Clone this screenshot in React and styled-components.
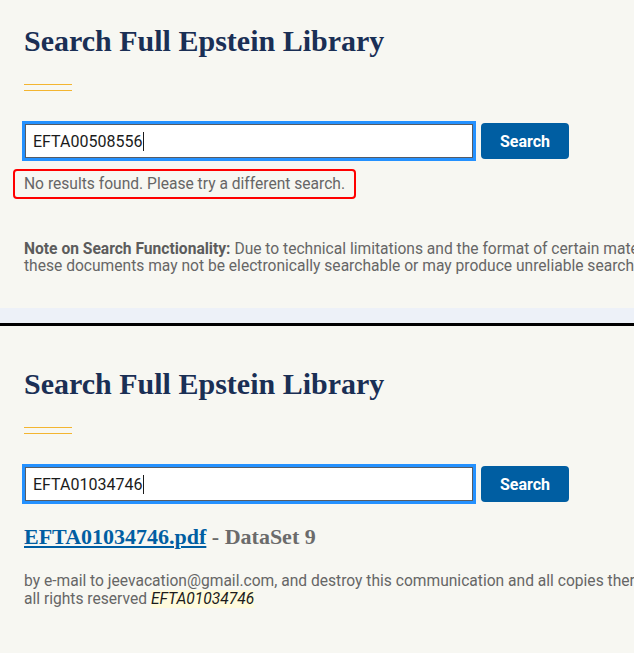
import React from 'react';
import styled, { createGlobalStyle } from 'styled-components';

const GlobalStyle = createGlobalStyle`
  html, body {
    margin: 0;
    padding: 0;
    background: #f7f7f2;
    overflow: hidden;
  }
  * {
    box-sizing: border-box;
  }
`;

const Page = styled.div`
  width: 634px;
  height: 653px;
  overflow: hidden;
  display: flex;
  flex-direction: column;
  background: #f7f7f2;
  font-family: Roboto, "Liberation Sans", sans-serif;
`;

const Panel = styled.section`
  flex: ${({ $grow }) => ($grow ? '1' : 'none')};
  height: ${({ $height }) => ($height ? `${$height}px` : 'auto')};
  padding: ${({ $top }) => $top}px 24px 0;
  overflow: hidden;
  background: #f7f7f2;
`;

const Band = styled.div`
  height: 15px;
  background: #edf1f8;
`;

const Separator = styled.div`
  height: 3px;
  background: #000;
`;

const Title = styled.h1`
  margin: 0;
  font-family: "Liberation Serif", "Times New Roman", serif;
  font-size: 30px;
  line-height: 36px;
  font-weight: 700;
  color: #1a2f55;
  white-space: nowrap;
`;

const Divider = styled.div`
  width: 48px;
  height: 7px;
  margin-top: 25px;
  border-top: 1px solid #f3b531;
  border-bottom: 1px solid #f3b531;
`;

const SearchForm = styled.form`
  display: flex;
  align-items: center;
  gap: 8px;
  margin: 32px 0 0 1px;
`;

const Field = styled.div`
  width: 448px;
  height: 34px;
  display: flex;
  align-items: center;
  padding: 0 7px;
  background: #fff;
  border: 1px solid #565c65;
  outline: 3px solid #2491ff;
  font-family: Roboto, "Liberation Sans", sans-serif;
  font-size: 16px;
  color: #1b1b1b;
`;

const Caret = styled.span`
  display: inline-block;
  width: 1px;
  height: 19px;
  margin-left: 1px;
  background: #1b1b1b;
`;

const Button = styled.button`
  width: 88px;
  height: 36px;
  border: 0;
  border-radius: 4px;
  background: #005ea2;
  color: #fff;
  font-family: Roboto, "Liberation Sans", sans-serif;
  font-size: 16px;
  font-weight: 700;
  cursor: pointer;
`;

const ErrorBox = styled.div`
  display: inline-block;
  margin: 10px 0 0 -11px;
  padding: 4px 9px;
  border: 2px solid #f00;
  border-radius: 4px;
  font-size: 15.6px;
  line-height: 18px;
  color: #666;
`;

const Note = styled.p`
  margin: 42px 0 0;
  font-size: 15.6px;
  line-height: 17px;
  color: #666;
  white-space: nowrap;

  strong {
    font-weight: 700;
    color: #5c5c5c;
  }
`;

const Result = styled.h2`
  margin: 22px 0 0;
  font-family: "Liberation Serif", "Times New Roman", serif;
  font-size: 22px;
  line-height: 26px;
  font-weight: 700;
  color: #6b6b6b;
  white-space: nowrap;

  a {
    color: #005ea2;
    text-decoration: underline;
    text-underline-offset: 2px;
  }
`;

const Snippet = styled.p`
  margin: 22px 0 0;
  font-size: 15.6px;
  line-height: 18px;
  color: #666;
  white-space: nowrap;

  mark {
    background: #fffbdc;
    color: #1b1b1b;
    font-style: italic;
  }
`;

const SearchBar = ({ value }) => (
  <SearchForm onSubmit={(e) => e.preventDefault()}>
    <Field role="textbox" aria-label="Search">
      {value}
      <Caret />
    </Field>
    <Button type="submit">Search</Button>
  </SearchForm>
);

const App = () => (
  <>
    <GlobalStyle />
    <Page>
      <Panel $height={308} $top={23}>
        <Title>Search Full Epstein Library</Title>
        <Divider />
        <SearchBar value="EFTA00508556" />
        <ErrorBox>No results found. Please try a different search.</ErrorBox>
        <Note>
          <strong>Note on Search Functionality:</strong> Due to technical limitations and the format of certain materials, some of
          <br />
          these documents may not be electronically searchable or may produce unreliable search results.
        </Note>
      </Panel>
      <Band />
      <Separator />
      <Panel $grow $top={40}>
        <Title>Search Full Epstein Library</Title>
        <Divider />
        <SearchBar value="EFTA01034746" />
        <Result>
          <a href="#">EFTA01034746.pdf</a> - DataSet 9
        </Result>
        <Snippet>
          by e-mail to jeevacation@gmail.com, and destroy this communication and all copies thereof, including all attachments.
          <br />
          all rights reserved <mark>EFTA01034746</mark>
        </Snippet>
      </Panel>
    </Page>
  </>
);

export default App;
